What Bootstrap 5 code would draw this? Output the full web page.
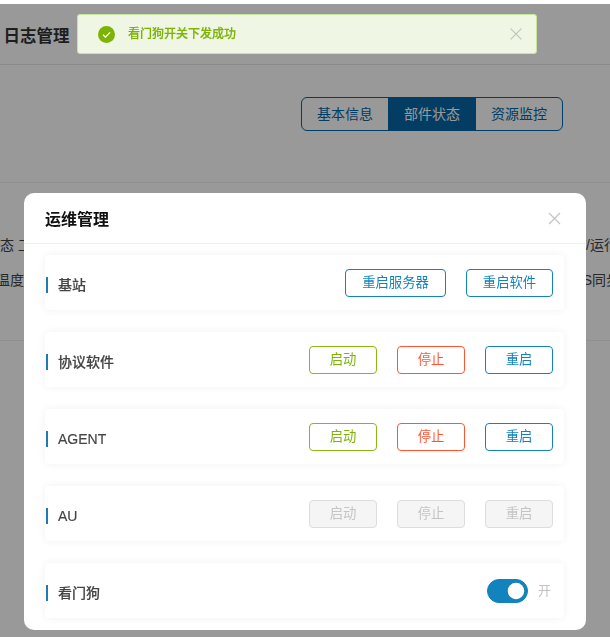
<!DOCTYPE html>
<html lang="zh-CN">
<head>
    <meta charset="UTF-8">
    <title>运维管理</title>
    <link href="https://cdn.jsdelivr.net/npm/bootstrap@5.3.0/dist/css/bootstrap.min.css" rel="stylesheet">
    <style>
        html, body { height: 100%; overflow: hidden; }
        body { font-family: "Liberation Sans", "Noto Sans CJK SC", sans-serif; color: #333; background: #fff; }

        .page-head { height: 61px; margin-top: 4px; padding: 5px 0 0 3.5px; border-bottom: 1px solid #e8e8e8; }
        .page-title { font-size: 16.5px; font-weight: 700; color: #333; }
        .tab-area { height: 118px; border-bottom: 1px solid #eee; padding: 32px 47px 0 0; }
        .tab-group .btn { width: 88px; height: 34px; padding: 0; font-size: 14px; color: #0566a5; border-color: #0566a5; background: #fff; }
        .tab-group .btn.active { color: #fff; background: #0566a5; border-color: #0566a5; }
        .info-area { height: 158px; border-bottom: 1px solid #eee; font-size: 14px; color: #444; overflow: hidden; }
        .info-line { height: 35px; white-space: nowrap; }
        .info-line.first { margin-top: 52px; }
        .info-left { margin-left: -14px; }
        .info-left.second { margin-left: -4px; }
        .info-right { margin-right: -36px; }
        .info-right.second { margin-right: -24px; }

        .modal-backdrop { top: 4px; height: auto; bottom: 0; }
        .modal-backdrop.show { opacity: .4; }
        .modal-dialog.ops-dialog { width: 562px; max-width: 562px; margin: 193px 0 0 24px; }
        .ops-dialog .modal-content { border: 0; border-radius: 10px; height: 437px; overflow: hidden; }
        .ops-dialog .modal-header { height: 51px; padding: 0 25px 0 21px; border-bottom: 1px solid #eef0f6; }
        .ops-dialog .modal-title { padding-top: 4px; font-size: 16px; font-weight: 700; color: #111; line-height: 1; }
        .ops-close { background: none; border: 0; padding: 0; line-height: 0; }
        .ops-dialog .modal-body { padding: 11px 22px 0 21px; }

        .ops-row { height: 55px; margin-bottom: 22px; padding: 0 11px 0 1px; border-radius: 4px; background: #fff; box-shadow: 0 0 8px rgba(0, 0, 0, .06); }
        .ops-label { height: 16px; margin-top: 5px; padding-left: 10px; border-left: 2.5px solid #2079b0; font-size: 14px; font-weight: 500; line-height: 16px; color: #444; -webkit-text-stroke: .15px #444; }
        .ops-gap { gap: 20px; }
        .ops-btn { height: 28px; padding: 0; font-size: 13.33px; line-height: 26px; border-radius: 4px; background: #fff; }
        .w-68 { width: 68px; }
        .w-87 { width: 87px; }
        .w-101 { width: 101px; }
        .ops-start, .ops-start:hover { color: #7cb305; border-color: #8ab911; }
        .ops-stop, .ops-stop:hover { color: #ff5533; border-color: #ff5533; }
        .ops-restart, .ops-restart:hover { color: #1283bd; border-color: #1283bd; }
        .ops-btn:disabled { color: #c4c4c4; border-color: #ddd; background: #f5f5f5; opacity: 1; }

        .form-switch .ops-switch { width: 41px; height: 24px; margin: 0; float: none; background-color: #1283bd; border-color: #1283bd; }
        .switch-text { font-size: 13px; color: #c4c4c4; margin: 0 2px 0 10px; }

        .ops-toast { position: fixed; top: 14px; left: 77px; z-index: 2000; width: 460px; height: 40px; margin: 0; padding: 0 14px 0 20px; border: 1px solid #c9e49b; border-radius: 3px; background: #eff6e3; font-size: 12px; font-weight: 500; color: #7cb305; }
        .ops-toast .toast-text { margin-left: 13px; -webkit-text-stroke: .2px #7cb305; }
    </style>
</head>
<body>
<div class="page-head d-flex align-items-center">
    <div class="page-title">日志管理</div>
</div>
<div class="tab-area d-flex justify-content-end align-items-start">
    <div class="btn-group tab-group">
        <button class="btn" type="button">基本信息</button>
        <button class="btn active" type="button">部件状态</button>
        <button class="btn" type="button">资源监控</button>
    </div>
</div>
<div class="info-area">
    <div class="info-line first d-flex justify-content-between">
        <span class="info-left">状态 工作</span>
        <span class="info-right">V/运行状态</span>
    </div>
    <div class="info-line d-flex justify-content-between">
        <span class="info-left second">温度</span>
        <span class="info-right second">S同步状</span>
    </div>
</div>

<div class="modal-backdrop show"></div>
<div class="modal d-block" tabindex="-1">
    <div class="modal-dialog ops-dialog">
        <div class="modal-content">
            <div class="modal-header justify-content-between">
                <h5 class="modal-title">运维管理</h5>
                <button class="ops-close" type="button" aria-label="关闭">
                    <svg width="13" height="13" viewBox="0 0 13 13"><path d="M1 1l11 11M12 1L1 12" stroke="#c4c4c4" stroke-width="1.3" fill="none"/></svg>
                </button>
            </div>
            <div class="modal-body">
                <div class="ops-row d-flex align-items-center justify-content-between">
                    <div class="ops-label">基站</div>
                    <div class="d-flex ops-gap">
                        <button class="btn ops-btn ops-restart w-101" type="button">重启服务器</button>
                        <button class="btn ops-btn ops-restart w-87" type="button">重启软件</button>
                    </div>
                </div>
                <div class="ops-row d-flex align-items-center justify-content-between">
                    <div class="ops-label">协议软件</div>
                    <div class="d-flex ops-gap">
                        <button class="btn ops-btn ops-start w-68" type="button">启动</button>
                        <button class="btn ops-btn ops-stop w-68" type="button">停止</button>
                        <button class="btn ops-btn ops-restart w-68" type="button">重启</button>
                    </div>
                </div>
                <div class="ops-row d-flex align-items-center justify-content-between">
                    <div class="ops-label">AGENT</div>
                    <div class="d-flex ops-gap">
                        <button class="btn ops-btn ops-start w-68" type="button">启动</button>
                        <button class="btn ops-btn ops-stop w-68" type="button">停止</button>
                        <button class="btn ops-btn ops-restart w-68" type="button">重启</button>
                    </div>
                </div>
                <div class="ops-row d-flex align-items-center justify-content-between">
                    <div class="ops-label">AU</div>
                    <div class="d-flex ops-gap">
                        <button class="btn ops-btn w-68" type="button" disabled>启动</button>
                        <button class="btn ops-btn w-68" type="button" disabled>停止</button>
                        <button class="btn ops-btn w-68" type="button" disabled>重启</button>
                    </div>
                </div>
                <div class="ops-row d-flex align-items-center justify-content-between">
                    <div class="ops-label">看门狗</div>
                    <div class="d-flex align-items-center">
                        <div class="form-check form-switch p-0 m-0 d-flex">
                            <input class="form-check-input ops-switch" type="checkbox" role="switch" checked>
                        </div>
                        <span class="switch-text">开</span>
                    </div>
                </div>
            </div>
        </div>
    </div>
</div>

<div class="alert ops-toast d-flex align-items-center justify-content-between" role="alert">
    <div class="d-flex align-items-center">
        <svg width="17" height="17" viewBox="0 0 17 17"><circle cx="8.5" cy="8.5" r="8.5" fill="#7cb305"/><path d="M5 8.8l2.4 2.3L12 6.4" stroke="#fff" stroke-width="1.3" fill="none"/></svg>
        <span class="toast-text">看门狗开关下发成功</span>
    </div>
    <svg width="12" height="12" viewBox="0 0 12 12"><path d="M.7.7l10.6 10.6M11.3.7L.7 11.3" stroke="#c0c6b8" stroke-width="1.2" fill="none"/></svg>
</div>
</body>
</html>
